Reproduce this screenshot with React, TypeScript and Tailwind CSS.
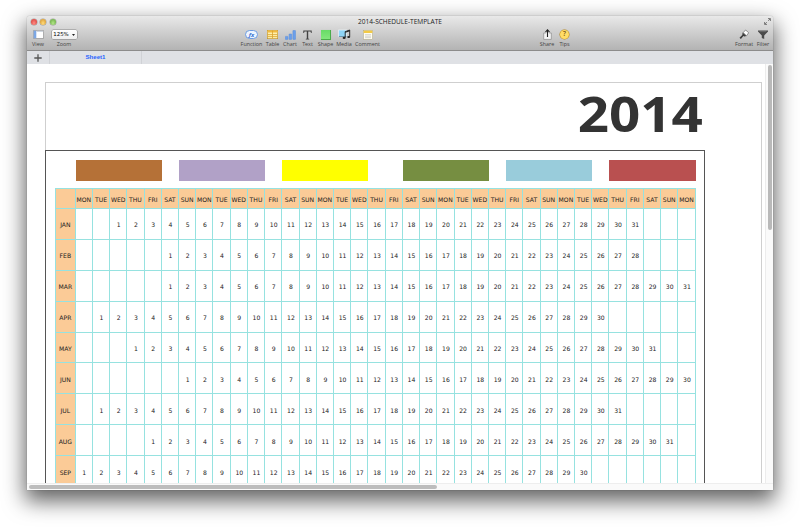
import type { ReactNode } from "react";

const DAYS = ["MON", "TUE", "WED", "THU", "FRI", "SAT", "SUN"];
const COLUMNS = Array.from({ length: 36 }, (_, i) => i);

const MONTHS = [
  { name: "JAN", start: 2, days: 31 },
  { name: "FEB", start: 5, days: 28 },
  { name: "MAR", start: 5, days: 31 },
  { name: "APR", start: 1, days: 30 },
  { name: "MAY", start: 3, days: 31 },
  { name: "JUN", start: 6, days: 30 },
  { name: "JUL", start: 1, days: 31 },
  { name: "AUG", start: 4, days: 31 },
  { name: "SEP", start: 0, days: 30 },
];

const SWATCHES = [
  "col-start-2 bg-[#b57137]",
  "col-start-8 bg-[#b1a1c7]",
  "col-start-14 bg-[#ffff00]",
  "col-start-21 bg-[#768e41]",
  "col-start-27 bg-[#99ccdb]",
  "col-start-33 bg-[#b95050]",
];

const GRID = "grid grid-cols-[20.7px_repeat(36,17.23px)]";
const LINE = "border-[#96e2e0]";

function Tool({ label, width, children }: { label: string; width: string; children: ReactNode }) {
  return (
    <div className={`flex shrink-0 flex-col items-center ${width}`}>
      <div className="flex h-[12px] items-center justify-center">{children}</div>
      <span className="whitespace-nowrap text-[5.4px] leading-[6px] text-[#444]">{label}</span>
    </div>
  );
}

function Light({ color }: { color: string }) {
  return <span className={`size-[6px] rounded-full shadow-[0_0_0.5px_0.5px_rgba(0,0,0,0.3)] ${color}`} />;
}

function Toolbar() {
  return (
    <header className="flex h-[35px] shrink-0 flex-col rounded-t-[3px] border-b border-[#8c8c8c] bg-linear-to-b from-[#e9e9e9] to-[#b3b3b3]">
      <div className="flex h-[12px] items-center px-[3.5px]">
        <div className="flex w-[60px] gap-[3.5px]">
          <Light color="bg-radial-[at_50%_70%] from-[#ff8d85] to-[#d0302c]" />
          <Light color="bg-radial-[at_50%_70%] from-[#ffdc80] to-[#d08c1c]" />
          <Light color="bg-radial-[at_50%_70%] from-[#b4e68a] to-[#5aa134]" />
        </div>
        <h1 className="flex-1 text-center font-['Open_Sans',sans-serif] text-[6.55px] leading-[12px] text-[#222]">
          2014-SCHEDULE-TEMPLATE
        </h1>
        <div className="flex w-[60px] justify-end">
          <svg width="7" height="7" viewBox="0 0 7 7" className="mr-[-1px] mt-[-1px]" fill="none" stroke="#777" strokeWidth="1">
            <path d="M4.2 2.8 6.3.7M4 .6h2.4V3M2.8 4.2.7 6.3M.6 4v2.4H3" />
          </svg>
        </div>
      </div>
      <div className="flex px-[1px] pt-[0.5px] font-['Open_Sans',sans-serif]">
        <Tool label="View" width="w-[20px]">
          <svg width="11" height="9" viewBox="0 0 11 9">
            <rect x=".4" y=".4" width="10.2" height="8.2" rx=".6" fill="#fff" stroke="#777" strokeWidth=".6" />
            <rect x=".7" y=".7" width="2.6" height="7.6" fill="#7ba7e5" />
            <rect x="3.5" y=".8" width="6.7" height="1.2" fill="#cfd6df" />
          </svg>
        </Tool>
        <Tool label="Zoom" width="w-[32px]">
          <span className="flex h-[8.5px] w-[25px] items-center justify-center gap-[3px] rounded-[1.5px] bg-linear-to-b from-white to-[#eee] font-['DejaVu_Sans',sans-serif] text-[5.4px] text-black shadow-[0_0_0.5px_0.5px_rgba(0,0,0,0.35)]">
            125%
            <svg width="3" height="2" viewBox="0 0 3 2">
              <path d="M0 0h3L1.5 2z" fill="#222" />
            </svg>
          </span>
        </Tool>
        <div className="w-[159px]" />
        <Tool label="Function" width="w-[25px]">
          <span className="flex h-[9px] w-[13.5px] items-center justify-center rounded-full border border-[#6c9be0] bg-[#edf5ff] text-[6px] font-bold italic leading-[6px] text-[#326ed2]">
            fx
          </span>
        </Tool>
        <Tool label="Table" width="w-[17px]">
          <svg width="11" height="9" viewBox="0 0 11 9">
            <rect x=".3" y=".3" width="10.4" height="8.4" fill="#fff1ac" stroke="#c19021" strokeWidth=".6" />
            <rect x=".5" y=".5" width="10" height="2" fill="#f2ba3e" />
            <path d="M5.5.5v8M.5 4.6h10M.5 6.6h10" stroke="#dba32e" strokeWidth=".8" />
          </svg>
        </Tool>
        <Tool label="Chart" width="w-[18px]">
          <svg width="11" height="10" viewBox="0 0 11 10" fill="#6b9fea" stroke="#5b8edb" strokeWidth=".5">
            <rect x=".3" y="6.4" width="2.6" height="3" rx=".3" />
            <rect x="4.1" y="4" width="2.6" height="5.4" rx=".3" />
            <rect x="7.9" y=".5" width="2.6" height="8.9" rx=".3" />
          </svg>
        </Tool>
        <Tool label="Text" width="w-[17px]">
          <svg width="9" height="10" viewBox="0 0 9 10">
            <path d="M.3.4h8.4V3H8L7.5 1.5H5.2v7l1 .5v.5H2.8V9l1-.5v-7H1.5L1 3H.3z" fill="#424242" />
          </svg>
        </Tool>
        <Tool label="Shape" width="w-[19px]">
          <span className="size-[8.5px] bg-linear-to-b from-[#68db67] to-[#82e77c] shadow-[0_0_0.5px_0.5px_#4aab4a]" />
        </Tool>
        <Tool label="Media" width="w-[18px]">
          <svg width="13" height="11" viewBox="0 0 13 11">
            <rect x=".7" y="1" width="8" height="6.5" fill="#8ed4f6" stroke="#edf5fa" strokeWidth=".7" />
            <path d="M1 7.5h7.5" stroke="#50829c" strokeWidth=".8" />
            <path d="M7.2 8.6V2.6L11.7 1v6.7" fill="none" stroke="#222" strokeWidth=".9" />
            <path d="M7.2 3.2 11.7 1.8" stroke="#222" strokeWidth="1.1" />
            <ellipse cx="6.1" cy="8.9" rx="1.5" ry="1.1" fill="#222" />
            <ellipse cx="10.7" cy="8" rx="1.5" ry="1.1" fill="#222" />
          </svg>
        </Tool>
        <Tool label="Comment" width="w-[29px]">
          <svg width="10" height="10" viewBox="0 0 10 10">
            <rect x=".4" y=".4" width="9.2" height="9" fill="#fffdf0" stroke="#a7a07f" strokeWidth=".5" />
            <rect x=".6" y=".6" width="8.8" height="2.4" fill="#f3ca45" />
            <path d="M2 4.7h6M2 6.2h6M2 7.7h6" stroke="#b8b8b8" strokeWidth=".6" />
          </svg>
        </Tool>
        <div className="w-[155px]" />
        <Tool label="Share" width="w-[20px]">
          <svg width="9" height="11" viewBox="0 0 9 11">
            <path d="M2.8 4H.7v6.4h7.6V4H6.2" fill="#f4f4f4" stroke="#888" strokeWidth=".7" />
            <path d="M4.5 8V1M2.5 3l2-2.2 2 2.2" fill="none" stroke="#222" strokeWidth="1.1" />
          </svg>
        </Tool>
        <Tool label="Tips" width="w-[15px]">
          <span className="flex size-[8.5px] items-center justify-center rounded-full bg-[#ffdc67] text-[6.5px] font-semibold leading-none text-[#76530c] shadow-[0_0_0.5px_0.5px_#b58519]">
            ?
          </span>
        </Tool>
        <div className="ml-auto flex">
          <Tool label="Format" width="w-[20px]">
            <svg width="10" height="11" viewBox="0 0 10 11">
              <path d="M4.2 3.6 6.6 1l3.1 2.7-2.2 3.1z" fill="#fff" stroke="#555" strokeWidth=".6" />
              <path d="M3.6 3.6 7.4 7 5.4 7.4 4.4 7.1 1.9 9.9.5 8.7 3.3 6.1z" fill="#3d3d3d" />
            </svg>
          </Tool>
          <Tool label="Filter" width="w-[18px]">
            <svg width="10" height="10" viewBox="0 0 10 10">
              <path d="M0 .5h10v1L6.2 5.4V9L3.8 8V5.4L0 1.5z" fill="#4a4a4a" />
              <path d="M1.6 1.6h6.8" stroke="#888" strokeWidth=".5" />
            </svg>
          </Tool>
        </div>
      </div>
    </header>
  );
}

function TabBar() {
  return (
    <nav className="flex h-[13px] shrink-0 bg-[#dfe1e5]">
      <div className="flex w-[23px] items-center justify-center border-r border-[#d0d2d6]">
        <svg width="8" height="8" viewBox="0 0 8 8" stroke="#555" strokeWidth="1.3">
          <path d="M4 .3v7.4M.3 4h7.4" />
        </svg>
      </div>
      <div className="w-[92px] border-r border-[#d0d2d6] text-center font-['Liberation_Sans',sans-serif] text-[6.1px] font-bold leading-[12.5px] text-[#2a65ff]">
        Sheet1
      </div>
    </nav>
  );
}

function Calendar() {
  return (
    <div className="ml-[9px] mt-[7px] w-[641px] font-['DejaVu_Sans',sans-serif] text-[6.1px] text-[#222]">
      <div className={`${GRID} border-t ${LINE}`}>
        <div className={`border-x border-b bg-[#fbcb97] ${LINE}`} />
        {COLUMNS.map((i) => (
          <div key={i} className={`flex h-[20px] items-center justify-center border-b border-r bg-[#fbcb97] pt-[3px] ${LINE}`}>
            {DAYS[i % 7]}
          </div>
        ))}
      </div>
      {MONTHS.map((m) => (
        <div key={m.name} className={`${GRID} h-[30.9px]`}>
          <div className={`flex items-center justify-center border-x border-b bg-[#fbcb97] pt-[2px] ${LINE}`}>{m.name}</div>
          {COLUMNS.map((i) => {
            const day = i - m.start + 1;
            return (
              <div key={i} className={`flex items-center justify-center border-b border-r pl-[1px] pt-[2px] ${LINE}`}>
                {day > 0 && day <= m.days ? day : ""}
              </div>
            );
          })}
        </div>
      ))}
    </div>
  );
}

function Sheet() {
  return (
    <main className="h-[419px] w-[738px] overflow-hidden bg-white pl-[18px] pt-[18px]">
      <div className="h-[420px] w-[717px] border border-[#cfcfcf]">
        <div className="flex h-[67px] w-[657px] items-center justify-end">
          <span className="origin-right scale-x-[1.14] pb-[5px] font-['Open_Sans',sans-serif] text-[48px] font-bold leading-none text-[#333]">
            2014
          </span>
        </div>
        <section className="ml-[-1px] h-[400px] w-[660px] border border-[#555]">
          <div className={`${GRID} ml-[9px] mt-[9px] h-[21px]`}>
            {SWATCHES.map((c) => (
              <div key={c} className={`col-span-5 row-start-1 ${c}`} />
            ))}
          </div>
          <Calendar />
        </section>
      </div>
    </main>
  );
}

export default function App() {
  return (
    <div className="flex h-[528px] w-[800px] items-start overflow-hidden bg-white px-[27px] pt-[16px]">
      <div className="flex h-[474px] w-[746px] flex-col rounded-t-[3px] bg-[#fafafa] shadow-[0_9px_21px_2px_rgba(0,0,0,0.62),0_0_1px_rgba(0,0,0,0.5)]">
        <Toolbar />
        <TabBar />
        <div className="flex h-[419px]">
          <Sheet />
          <div className="flex w-[8px] justify-center border-l border-[#ececec] pt-[1px]">
            <div className="h-[165px] w-[4px] rounded-full bg-[#b9b9b9]" />
          </div>
        </div>
        <div className="h-[7px] border-t border-[#eee] pl-[2px] pt-[1px]">
          <div className="h-[4px] w-[408px] rounded-full bg-[#bdbdbd]" />
        </div>
      </div>
    </div>
  );
}
